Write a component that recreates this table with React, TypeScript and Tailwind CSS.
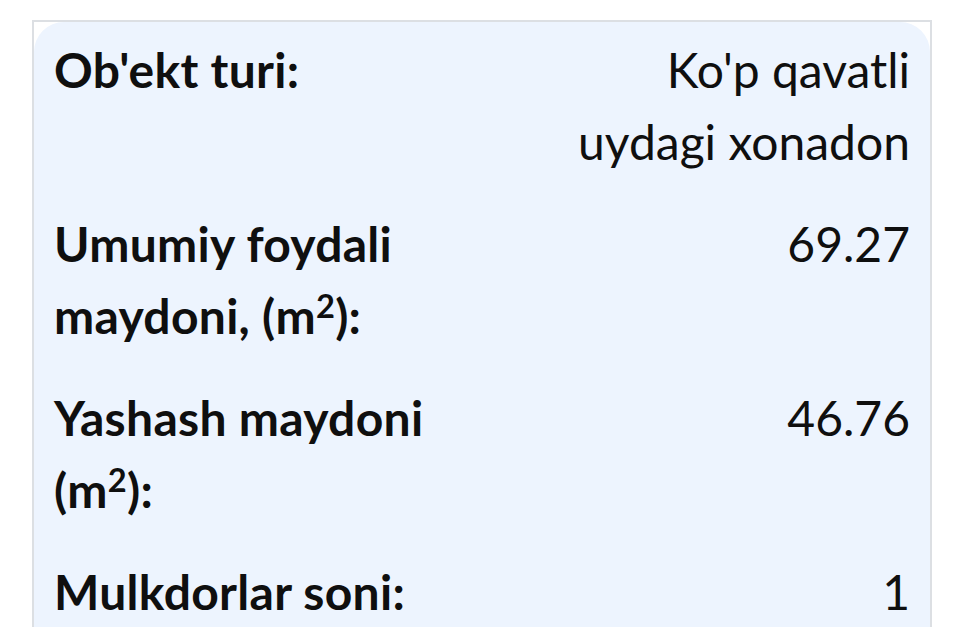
import React from "react";

type Row = { label: React.ReactNode; value: React.ReactNode };

const Sup = () => <sup className="top-0 align-[0.5em] text-[0.68em] leading-none">2</sup>;

const rows: Row[] = [
  { label: "Ob'ekt turi:", value: "Ko'p qavatli uydagi xonadon" },
  {
    label: (
      <>
        Umumiy foydali maydoni, (m<Sup />):
      </>
    ),
    value: "69.27",
  },
  {
    label: (
      <>
        Yashash maydoni (m<Sup />):
      </>
    ),
    value: "46.76",
  },
  { label: "Mulkdorlar soni:", value: "1" },
];

export default function App() {
  return (
    <div className="h-[627px] w-[963px] overflow-hidden bg-white pl-[32px] pt-[20px] font-['Lato','Noto_Sans',sans-serif] text-[#0f0f0f]">
      <div className="h-[640px] w-[900px] border-x-2 border-t-2 border-[#dcdfe3]">
        <div className="flex h-full flex-col gap-[30px] rounded-t-[30px] bg-[#edf4fe] px-[20px] pt-[12px]">
          {rows.map((r, i) => (
            <div key={i} className="flex items-start justify-between text-[48px] leading-[72px]">
              <div className="w-[410px] font-bold tracking-[0.3px]">{r.label}</div>
              <div className="w-[362px] text-right font-normal">{r.value}</div>
            </div>
          ))}
        </div>
      </div>
    </div>
  );
}
